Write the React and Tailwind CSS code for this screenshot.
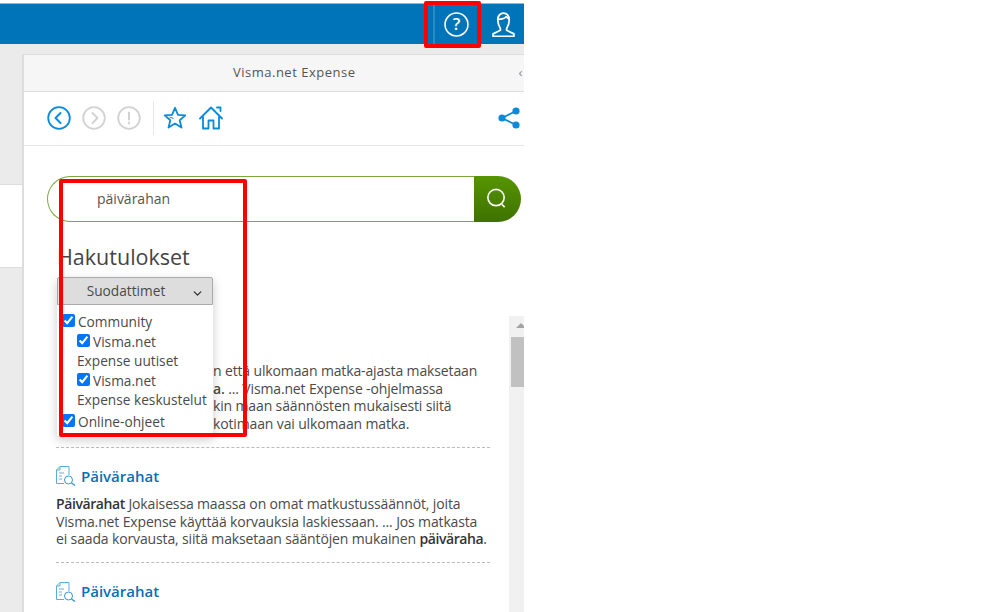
import { ChevronDown } from "lucide-react";

const font = { fontFamily: '"Open Sans", sans-serif' };

const Arrow = ({ d, color }) => (
  <svg viewBox="0 0 24 24" className="h-6 w-6" fill="none" stroke={color} strokeWidth="1.8" strokeLinecap="round" strokeLinejoin="round">
    <circle cx="12" cy="12" r="10.8" />
    <path d={d} strokeWidth="2" />
  </svg>
);

const Star = () => (
  <svg viewBox="0 0 24 24" className="h-6 w-6" fill="none" stroke="#0a8ad8" strokeWidth="1.8" strokeLinejoin="round">
    <path d="M12 1.800l3 7 7.300.6-5.600 4.800 1.800 7.400L12 17.600l-6.500 4 1.800-7.400L1.700 9.400 9 8.800z" />
    <path d="M6.500 11l4 1.500" strokeWidth="1" />
  </svg>
);

const Home = () => (
  <svg viewBox="0 0 24 24" className="h-6 w-6" fill="none" stroke="#0a8ad8" strokeWidth="1.800" strokeLinejoin="round" strokeLinecap="round">
    <path d="M1 12.500L12 1.500l11 11M18 1.500h3.500V5M4 10.500V22.500h5.500v-8h5v8H20V10.500" />
  </svg>
);

const Share = () => (
  <svg viewBox="0 0 24 24" className="h-6 w-6" fill="#0a8ad8" stroke="#0a8ad8" strokeWidth="1.800">
    <path d="M19 5L5 12l14 7" fill="none" />
    <circle cx="19" cy="5" r="3.600" stroke="none" />
    <circle cx="5" cy="12" r="3.600" stroke="none" />
    <circle cx="19" cy="19" r="3.600" stroke="none" />
  </svg>
);

const DocSearch = () => (
  <svg viewBox="0 0 20 20" className="h-[20px] w-[20px] shrink-0" fill="none" stroke="#5aaede" strokeWidth="1">
    <path d="M8 17.500H.5V4L4 .5h9V9" />
    <path d="M4 .5V4H.5" />
    <path d="M3 7h5M3 10h3M3 13h3" stroke="#9cc8e4" strokeWidth="1.500" />
    <circle cx="12.500" cy="14" r="4" stroke="#3d95cc" />
    <path d="M15.500 17l3.500 2.500" strokeWidth="1.400" stroke="#3d95cc" />
  </svg>
);

const Check = ({ label, second, nested, last }) => (
  <div className={`leading-[20px] ${nested ? "pl-[20px]" : "pl-[5px]"} ${last ? "mt-[2px]" : ""}`}>
    <input type="checkbox" defaultChecked className="mr-[3px] h-[13px] w-[13px] accent-[#0075ff]" />
    <span>{label}</span>
    {second && <div className="-mt-[1px]">{second}</div>}
  </div>
);

const ResultTitle = ({ children }) => (
  <div className="flex h-[26px] items-center gap-[5px]">
    <DocSearch />
    <span className="text-[15px] font-[550] text-[#0a6eb4]">{children}</span>
  </div>
);

export default function App() {
  return (
    <div className="relative h-[612px] w-[999px] overflow-hidden bg-white" style={font}>
      <div className="w-[524px] overflow-hidden pt-[3px]">
        <div className="flex h-[41px] items-center justify-end border-t border-[#8fb8d4] bg-[#0074b8] text-white">
          <div className="flex h-[40px] w-[46px] items-center justify-center border-l-2 border-[#2a8ac6] pr-[2px]">
            <svg viewBox="0 0 24 24" className="h-[25px] w-[25px]" fill="none" stroke="white" strokeWidth="1.500">
              <circle cx="12" cy="12" r="11" />
              <text x="12" y="17.500" textAnchor="middle" fontSize="16" fontWeight="600" fill="white" stroke="none" fontFamily="Open Sans">?</text>
            </svg>
          </div>
          <div className="flex w-[45px] items-center justify-center pl-[4px]">
            <svg viewBox="0 0 24 24" className="h-[25px] w-[25px]" fill="none" stroke="white" strokeWidth="1.700" strokeLinejoin="round">
              <path d="M9 16C7.500 13.500 6.500 10.500 6.500 7.500c0-3.800 2.500-6.500 5.500-6.500s5.500 2.700 5.500 6.500c0 3-1 6-2.500 8.500v1.500l7 3.500v2.500H2v-2.500l7-3.500z" />
              <path d="M6.500 7c3 0 7-.5 8-2.500 1 1 2 2 3 2.500" />
            </svg>
          </div>
        </div>

        <div className="flex h-[568px]">
          <div className="flex w-[22px] shrink-0 flex-col">
            <div className="h-[140px] bg-[#ebebeb]" />
            <div className="h-[84px] border-y border-[#dddddd] bg-white" />
            <div className="flex-1 bg-[#ebebeb]" />
          </div>
          <div className="min-w-0 flex-1 bg-[#ebebeb] pt-[10px]">
            <div className="h-full border-l-2 border-t border-[#dddddd] bg-white">
              <div className="flex h-[37px] items-center overflow-hidden whitespace-nowrap border-b border-[#dddddd] bg-[#f6f6f6] pl-[209px] text-[13px] tracking-[0.5px] text-[#555555]">
                <span className="shrink-0">Visma.net Expense</span>
                <span className="ml-[163px] shrink-0 text-[#888888]">‹</span>
              </div>
              <div className="flex h-[54px] items-center border-b border-[#e6e6e6] pb-[2px] pl-[23px] pr-[3px]">
                <Arrow color="#0a8ad8" d="M13.500 7l-5 5 5 5" />
                <div className="ml-[11px]"><Arrow color="#d2d2d2" d="M10.500 7l5 5-5 5" /></div>
                <div className="ml-[11px]"><Arrow color="#d2d2d2" d="M12 6.500v7M12 16.500v1" /></div>
                <div className="ml-[12px] h-[34px] w-px bg-[#e6e6e6]" />
                <div className="ml-[9px]"><Star /></div>
                <div className="ml-[12px]"><Home /></div>
                <div className="ml-auto"><Share /></div>
              </div>

              <div className="flex pl-[23px] pr-[3px] pt-[30px]">
                <div className="flex h-[46px] flex-1 items-center rounded-l-[23px] border border-r-0 border-[#7aa83f] pb-[2px] pl-[49px] text-[14px] text-[#555555]">
                  päivärahan
                </div>
                <div className="flex h-[46px] w-[47px] items-center justify-center rounded-r-[23px] bg-gradient-to-b from-[#569500] to-[#3f7200] pb-[2px] pr-[3px]">
                  <svg viewBox="0 0 24 24" className="h-[23px] w-[23px]" fill="none" stroke="white" strokeWidth="1.700">
                    <circle cx="11.500" cy="11" r="8.500" />
                    <path d="M17.500 18l3 3" />
                  </svg>
                </div>
              </div>

              <h1 className="mt-[20px] pl-[33px] text-[21.500px] leading-[30px] text-[#444444]">Hakutulokset</h1>

              <div className="mt-[4px] flex pl-[32px]">
                <div className="w-[434px] shrink-0">
                  <div className="border-b border-dashed border-[#bbbbbb] pb-[15px] pt-[86px]">
                    <p className="pl-[157px] text-[14px] leading-[17.500px] tracking-[-0.14px] text-[#4a4a4a]">
                      <span className="block whitespace-nowrap">n että ulkomaan matka-ajasta maksetaan</span>
                      <span className="block whitespace-nowrap"><b className="font-semibold">a.</b> ... Visma.net Expense -ohjelmassa</span>
                      <span className="block whitespace-nowrap">kin maan säännösten mukaisesti siitä</span>
                      <span className="block whitespace-nowrap">kotimaan vai ulkomaan matka.</span>
                    </p>
                  </div>
                  <div className="border-b border-dashed border-[#bbbbbb] pb-[14px] pt-[15px]">
                    <ResultTitle>Päivärahat</ResultTitle>
                    <p className="mt-[6px] text-[14px] leading-[17.500px] tracking-[-0.14px] text-[#4a4a4a]">
                      <span className="block whitespace-nowrap"><b className="font-semibold tracking-[-0.4px] text-[#333333]">Päivärahat</b> Jokaisessa maassa on omat matkustussäännöt, joita</span>
                      <span className="block whitespace-nowrap">Visma.net Expense käyttää korvauksia laskiessaan. ... Jos matkasta</span>
                      <span className="block whitespace-nowrap">ei saada korvausta, siitä maksetaan sääntöjen mukainen <b className="font-semibold tracking-[-0.4px] text-[#333333]">päiväraha</b>.</span>
                    </p>
                  </div>
                  <div className="pt-[16px]">
                    <ResultTitle>Päivärahat</ResultTitle>
                  </div>
                </div>
                <div className="ml-[19px] mt-[40px] flex w-[15px] shrink-0 flex-col bg-[#f1f1f1] pl-[2px]">
                  <div className="ml-[5px] mt-[7px] h-0 w-0 border-x-[5px] border-b-[5px] border-x-transparent border-b-[#a3a3a3]" />
                  <div className="mt-[9px] h-[50px] w-full bg-[#c1c1c1]" />
                  <div className="h-[230px]" />
                </div>
              </div>
            </div>
          </div>
        </div>
      </div>

      {/* filter dropdown */}
      <div className="absolute left-[57px] top-[277px] w-[156px] text-[13.700px] text-[#4a4a4a] shadow-[0_4px_10px_rgba(0,0,0,0.2)]">
        <div className="flex h-[28px] items-center justify-center rounded-t-[2px] border border-[#aaaaaa] bg-[#dddddd] pr-[18px]">
          <span>Suodattimet</span>
          <ChevronDown strokeWidth={2.500} className="absolute right-[9px] top-[10px] h-[13px] w-[13px] text-[#333333]" />
        </div>
        <div className="h-[131px] bg-white pt-[7px]">
          <Check label="Community" />
          <Check nested label="Visma.net" second="Expense uutiset" />
          <Check nested label="Visma.net" second="Expense keskustelut" />
          <Check last label="Online-ohjeet" />
        </div>
      </div>

      {/* red annotations */}
      <div className="absolute left-[59px] top-[179px] h-[258px] w-[188px] rounded-[2px] border-[4px] border-[#ff0000]" />
      <div className="absolute left-[424px] top-[1px] h-[47px] w-[57px] rounded-[2px] border-[4px] border-[#ff0000]" />
    </div>
  );
}
